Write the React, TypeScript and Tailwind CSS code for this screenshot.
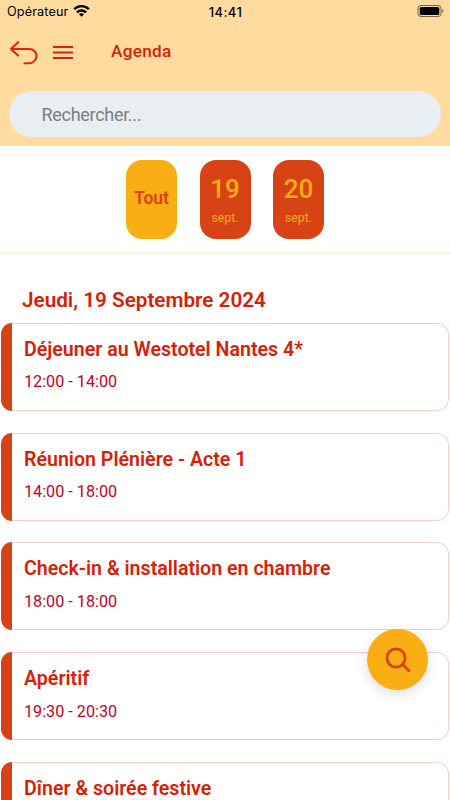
import { useState } from 'react'

const days = [
	{ id: '19', month: 'sept.' },
	{ id: '20', month: 'sept.' },
]

const events = [
	{ title: 'Déjeuner au Westotel Nantes 4*', time: '12:00 - 14:00' },
	{ title: 'Réunion Plénière - Acte 1', time: '14:00 - 18:00' },
	{ title: 'Check-in & installation en chambre', time: '18:00 - 18:00' },
	{ title: 'Apéritif', time: '19:30 - 20:30' },
	{ title: 'Dîner & soirée festive', time: '' },
]

function StatusBar() {
	return (
		<div className="grid grid-cols-3 items-center h-[22px] pl-[7px] pr-[6px] text-black font-['Inter',sans-serif]">
			<div className="flex items-center gap-[5px]">
				<span className="pt-[2px] text-[12.7px] leading-none tracking-[0.1px]">Opérateur</span>
				<svg className="w-[17px] h-3" viewBox="0 0 17 12" fill="none" stroke="currentColor">
					<path strokeWidth="2.4" d="M1.1 4.2a10.5 10.5 0 0 1 14.8 0" />
					<path strokeWidth="2.4" d="M3.9 7.4a6.6 6.6 0 0 1 9.2 0" />
					<path fill="currentColor" stroke="none" d="M8.5 11.8 6 9.5a3.6 3.6 0 0 1 5 0Z" />
				</svg>
			</div>
			<span className="pt-[2px] text-center text-[13px] leading-none font-medium tracking-[0.4px]">14:41</span>
			<svg className="w-[27px] h-3 justify-self-end" viewBox="0 0 27 12" fill="none">
				<rect x="1" y="0.5" width="23" height="11" rx="3" stroke="#000" strokeOpacity="0.55" />
				<rect x="2.7" y="2" width="19.6" height="8" rx="1.5" fill="#000" />
				<path d="M25.2 4.2v3.6c.9-.3 1.2-1 1.2-1.8s-.3-1.5-1.2-1.8Z" fill="#000" fillOpacity="0.55" />
			</svg>
		</div>
	)
}

export default function App() {
	const [selected, setSelected] = useState('all')
	const [search, setSearch] = useState('')

	return (
		<main className="relative w-[450px] h-[800px] overflow-hidden bg-white text-[#d81e05] font-['Roboto',sans-serif]">
			{/* Header */}
			<header className="h-[146px] bg-[#ffdb9f]">
				<StatusBar />
				<div className="flex items-center h-[60px] pl-[9px]">
					<button aria-label="Retour">
						<svg
							className="w-[29px] h-[25px]"
							viewBox="0 0 29 25"
							fill="none"
							stroke="#d9290b"
							strokeWidth="2.1"
							strokeLinecap="round"
							strokeLinejoin="round"
						>
							<path d="M9.1 2.2 1.9 9l7.2 6.6M1.9 9h18.5a7 7 0 0 1 0 14.2h-4.9" />
						</svg>
					</button>
					<button aria-label="Menu" className="ml-[15px]">
						<svg className="w-5 h-[15px]" viewBox="0 0 20 15" stroke="#d9200b" strokeWidth="2">
							<path d="M0 2h20M0 7.5h20M0 13h20" />
						</svg>
					</button>
					<h1 className="ml-[38px] pb-[2px] text-[17.2px] leading-5 font-medium tracking-[0.3px]">Agenda</h1>
				</div>
				<div className="px-[9px] pt-[9px]">
					<input
						className="block w-full h-[46px] pl-[32.5px] pr-8 rounded-full bg-[#e9eef2] text-[18px] tracking-[-0.3px] placeholder:text-[#7c7f82] outline-none"
						placeholder="Rechercher..."
						value={search}
						onChange={(e) => setSearch(e.target.value)}
					/>
				</div>
			</header>

			{/* Day picker */}
			<div className="flex justify-center gap-[22.5px] h-[108px] pt-[14px] border-b-2 border-[#fff2dc]">
				<button
					className="w-[51px] h-[79px] pb-[3px] rounded-[16px] bg-[#f9ae13] text-[#d84315] text-[17.5px] font-semibold"
					onClick={() => setSelected('all')}
					aria-pressed={selected === 'all'}
				>
					Tout
				</button>
				{days.map((day) => (
					<button
						key={day.id}
						className="flex flex-col items-center w-[51px] h-[79px] pt-[14px] rounded-[16px] bg-[#d84315] text-[#f9ae13]"
						onClick={() => setSelected(day.id)}
						aria-pressed={selected === day.id}
					>
						<span className="text-[26px] leading-[30px] font-medium">{day.id}</span>
						<span className="mt-[6px] text-[12px] leading-4 tracking-[0.1px]">{day.month}</span>
					</button>
				))}
			</div>

			{/* Events */}
			<section className="px-px pt-[34px]">
				<h2 className="pl-[21px] text-[20.7px] leading-6 font-semibold">Jeudi, 19 Septembre 2024</h2>
				<div className="flex flex-col gap-[21.8px] mt-[10.8px]">
					{events.map((event) => (
						<article key={event.title} className="flex h-[88px] shrink-0">
							<div className="w-[11px] rounded-l-[11px] bg-[#d84315]" />
							<div className="flex-1 pl-3 pt-[14px] rounded-r-[12px] border border-l-0 border-[#f7d0c5]">
								<h3 className="text-[19.6px] leading-6 font-semibold">{event.title}</h3>
								{event.time && (
									<p className="mt-[10.5px] text-[16.2px] leading-5 text-[#c4002b]">{event.time}</p>
								)}
							</div>
						</article>
					))}
				</div>
			</section>

			<button
				aria-label="Rechercher"
				className="absolute left-[367px] top-[629px] flex items-center justify-center w-[61px] h-[61px] rounded-full bg-[#f9ae13] shadow-[0_4px_14px_rgba(0,0,0,0.13)]"
			>
				<svg className="w-[26px] h-[26px]" viewBox="0 0 26 26" fill="none" stroke="#d84315" strokeWidth="2.8">
					<circle cx="11" cy="11" r="9.1" />
					<path d="m17.6 17.6 7 7" />
				</svg>
			</button>
		</main>
	)
}
